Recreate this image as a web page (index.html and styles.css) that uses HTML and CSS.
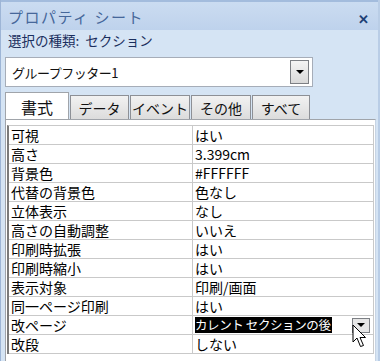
FILE: index.html
```html
<!DOCTYPE html>
<html><head>
<meta charset="utf-8">
<title>プロパティ シート</title>
<link rel="stylesheet" href="styles.css"></head><body>
<div id="sheet">
    <div class="titlebar">
        <span class="title">プロパティ シート</span>
        <span class="close">✕</span>
    </div>
    <div class="kind">選択の種類:&nbsp; セクション</div>

    <div class="combo">
        <span class="combotext">グループフッター1</span>
        <span class="dropbtn"><span class="tri"></span></span>
    </div>

    <div class="tabs">
        <div class="tab active">書式</div>
        <div class="tab">データ</div>
        <div class="tab">イベント</div>
        <div class="tab">その他</div>
        <div class="tab">すべて</div>
    </div>

    <div class="panel">
        <div class="grid">
            <div class="row"><div class="name">可視</div><div class="val">はい</div></div>
            <div class="row"><div class="name">高さ</div><div class="val">3.399cm</div></div>
            <div class="row"><div class="name">背景色</div><div class="val">#FFFFFF</div></div>
            <div class="row"><div class="name">代替の背景色</div><div class="val">色なし</div></div>
            <div class="row"><div class="name">立体表示</div><div class="val">なし</div></div>
            <div class="row"><div class="name">高さの自動調整</div><div class="val">いいえ</div></div>
            <div class="row"><div class="name">印刷時拡張</div><div class="val">はい</div></div>
            <div class="row"><div class="name">印刷時縮小</div><div class="val">はい</div></div>
            <div class="row"><div class="name">表示対象</div><div class="val">印刷/画面</div></div>
            <div class="row"><div class="name">同一ページ印刷</div><div class="val">はい</div></div>
            <div class="row current"><div class="name">改ページ</div><div class="val"><span class="hl">カレント セクションの後</span><span class="minibtn"><span class="tri"></span></span></div></div>
            <div class="row"><div class="name">改段</div><div class="val">しない</div></div>
        </div>
        <svg class="cursor" width="16" height="25" viewBox="0 0 16 25">
            <path d="M1 1 L1 18 L5 14 L8.5 22.5 L11.5 21.5 L8 13.5 L13.5 13.5 Z" fill="#fff" stroke="#000" stroke-width="1"/>
        </svg>
    </div>
</div>
</body></html>
```

FILE: styles.css
```css
body{margin:0;padding:0;font-family:"Noto Sans CJK JP","Noto Sans",sans-serif;}
#sheet{width:380px;height:361px;background:#d5e4f4;border-left:1px solid #9db5d6;border-right:2px solid #b9cde6;box-sizing:border-box;overflow:hidden;}

.titlebar{height:30px;display:flex;align-items:center;justify-content:space-between;
    padding:0 9px 0 7px;background:linear-gradient(#cbdcf1,#bed2ec);border-top:2px solid #a3bcdd;box-sizing:border-box;}
.title{font-size:15px;color:#46679a;letter-spacing:1.5px;}
.close{font-size:13px;font-weight:bold;color:#1e3f75;margin-top:4px;}

.kind{height:22px;padding-left:7px;font-size:13.5px;color:#1b2f5e;line-height:20px;}

.combo{margin:5px 0 0 4px;width:308px;height:30px;box-sizing:border-box;background:#fff;
    border:1px solid #a6adb8;display:flex;align-items:center;justify-content:space-between;padding:0 3px 0 6px;}
.combotext{font-size:13px;color:#111;letter-spacing:-0.5px;}
.dropbtn{width:19px;height:24px;box-sizing:border-box;border:1px solid #7c7f84;background:linear-gradient(#f4f4f4,#d9d9d9);
    display:flex;align-items:center;justify-content:center;}
.tri{width:0;height:0;border-left:4px solid transparent;border-right:4px solid transparent;border-top:4px solid #000;}

.tabs{display:flex;margin:5px 0 0 4px;height:27px;align-items:flex-end;}
.tab{height:24px;box-sizing:border-box;border:1px solid #8d9096;border-bottom:none;background:linear-gradient(#f2f2f2,#dcdcdc);
    font-size:14px;color:#111;display:flex;align-items:center;justify-content:center;margin-right:1px;padding-top:1px;}
.tab:nth-child(1){width:64px;}
.tab:nth-child(2){width:59px;}
.tab:nth-child(3){width:60px;}
.tab:nth-child(4){width:60px;}
.tab:nth-child(5){width:58px;}
.tab.active{height:27px;background:#fff;border-color:#a0a4aa;font-size:16px;}

.panel{position:relative;margin-left:4px;width:371px;height:250px;background:#fff;border:1px solid #a0a4aa;border-right:1px solid #c7d4e4;box-sizing:border-box;padding:5px 0 0 1px;}
.grid{width:365px;border-left:2px solid #7b7b7b;border-top:1px solid #c9c9c9;}
.row{display:flex;height:19px;box-sizing:border-box;border-bottom:1px solid #c9c9c9;font-size:14px;line-height:18px;color:#000;}
.name{width:184px;box-sizing:border-box;border-right:1px solid #c9c9c9;padding-left:2px;white-space:nowrap;}
.val{flex:1;padding-left:2px;display:flex;align-items:center;border-right:1px solid #c9c9c9;white-space:nowrap;}
.hl{background:#000;color:#fff;font-size:12.5px;line-height:16px;letter-spacing:-0.4px;padding-right:1px;}
.minibtn{margin-left:auto;margin-right:3px;width:18px;height:15px;box-sizing:border-box;border:1px solid #7c7f84;background:#e6e6e6;
    display:flex;align-items:center;justify-content:center;}
.cursor{position:absolute;left:346px;top:204px;}
```
